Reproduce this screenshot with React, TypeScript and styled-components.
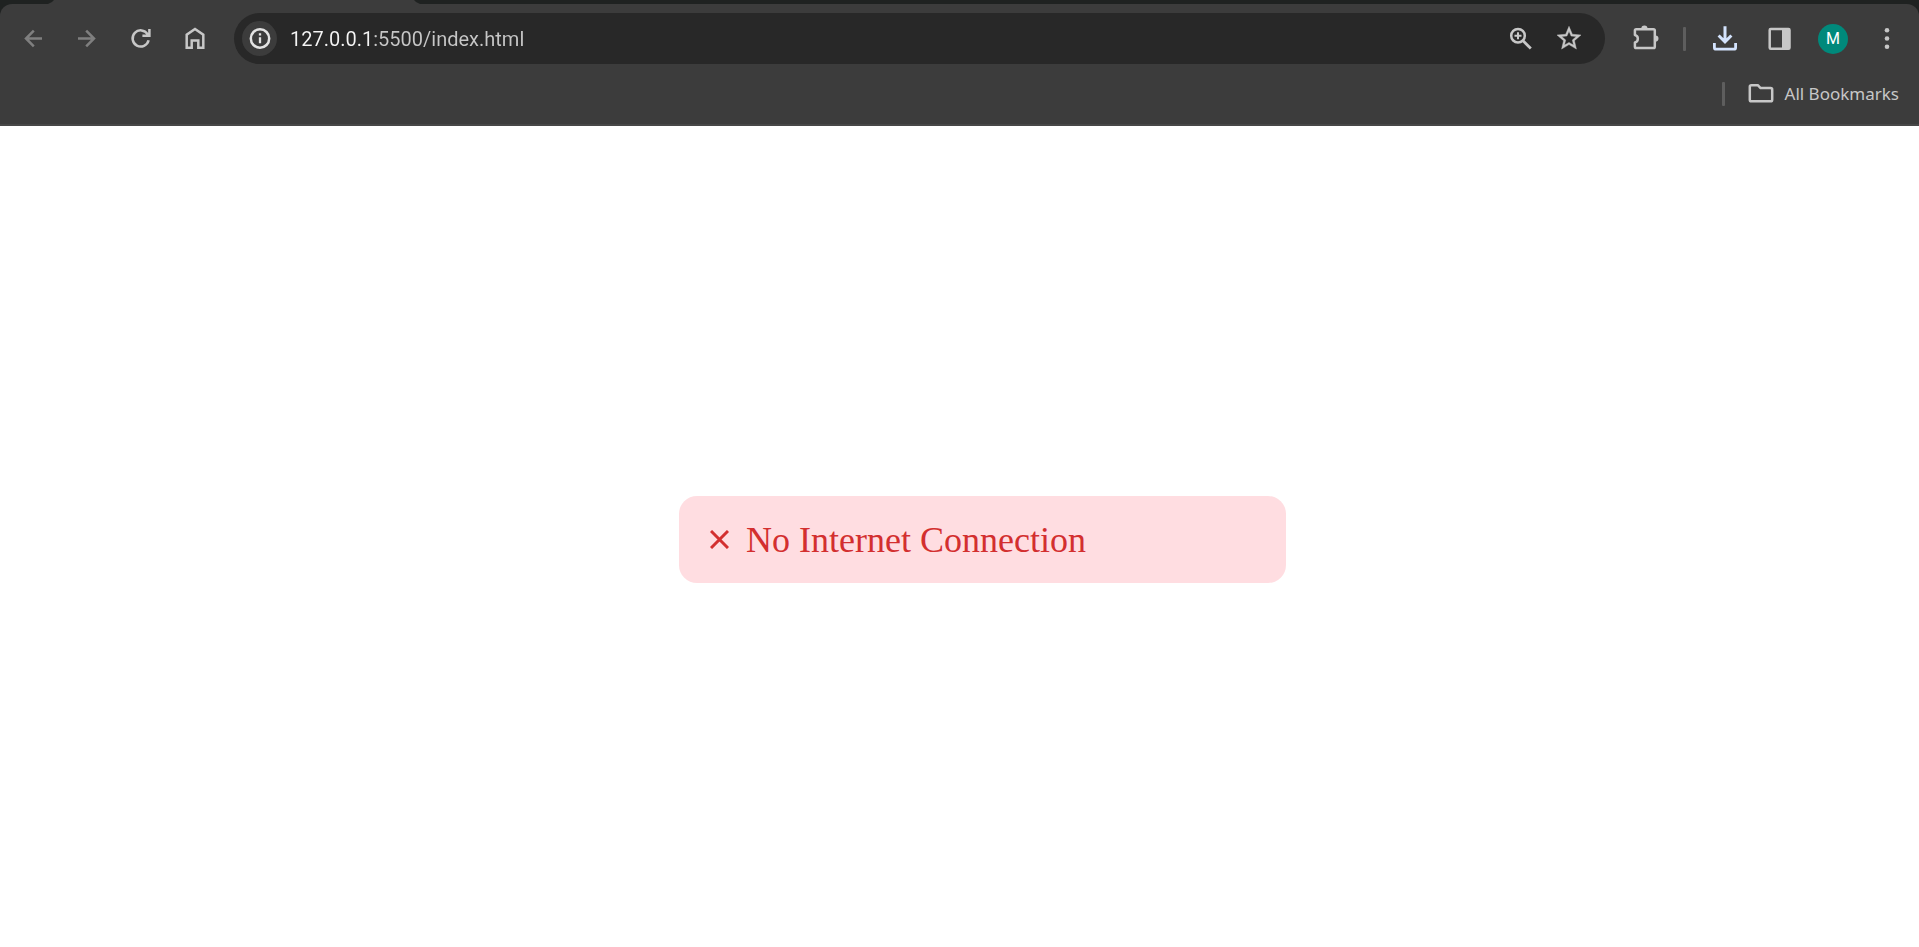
import React, { useState } from "react";
import styled, { createGlobalStyle } from "styled-components";

const GlobalStyle = createGlobalStyle`
  *, *::before, *::after { box-sizing: border-box; }
  html, body, #root { height: 100%; }
  body { margin: 0; background: #fff; }
  button, input { font: inherit; border: 0; padding: 0; background: none; outline: none; }
  button { cursor: pointer; }
`;

const Window = styled.div`
  display: flex;
  flex-direction: column;
  min-height: 100%;
`;

const BrowserChrome = styled.header`
  background: #1f2221;
  font-family: Roboto, "Segoe UI", sans-serif;
`;

const TabStrip = styled.div`
  height: 4px;
  padding-left: 48px;
`;

const ActiveTab = styled.div`
  width: 372px;
  height: 4px;
  background: #3c3c3c;
  clip-path: polygon(6px 0, 366px 0, 368px 2px, 100% 100%, 0 100%, 4px 2px);
`;

const Bars = styled.div`
  background: #3c3c3c;
  border-radius: 12px 12px 0 0;
  border-bottom: 2px solid #474747;
`;

const Toolbar = styled.nav`
  display: flex;
  align-items: center;
  padding: 9px 5px 0 6px;
`;

const IconButton = styled.button<{ $tone?: string; $width?: number }>`
  display: flex;
  flex: none;
  align-items: center;
  justify-content: center;
  width: ${(p) => p.$width ?? 54}px;
  height: 31px;
  color: ${(p) => p.$tone ?? "#c7c7c7"};
`;

const Glyph = styled.svg`
  display: block;
  flex: none;
  width: 30px;
  height: 31px;
  fill: none;
  stroke: currentColor;
  stroke-width: 2.5;
`;

const AddressBar = styled.div`
  display: flex;
  flex: 1;
  align-items: center;
  height: 51px;
  margin: 0 14px 0 12px;
  padding: 0 12px 0 8px;
  border-radius: 26px;
  background: #282828;
`;

const SiteInfo = styled.button`
  display: flex;
  flex: none;
  align-items: center;
  justify-content: center;
  width: 35px;
  height: 35px;
  border-radius: 50%;
  background: #3c3c3c;
  color: #e3e3e3;
`;

const UrlInput = styled.input`
  flex: 1;
  min-width: 0;
  height: 31px;
  margin-left: 13px;
  font-size: 20px;
  line-height: 30px;
  color: #c7c7c7;
  background: linear-gradient(to right, #f5f5f5 79px, #c7c7c7 79px);
  background-clip: text;
  -webkit-text-fill-color: transparent;
`;

const Divider = styled.span`
  flex: none;
  width: 3px;
  height: 24px;
  margin: 0 12px 0 10px;
  border-radius: 1px;
  background: #5e5e5e;
`;

const Avatar = styled.span`
  display: flex;
  align-items: center;
  justify-content: center;
  width: 30px;
  height: 30px;
  border-radius: 50%;
  background: #00897b;
  color: #fff;
  font: 16px/30px Roboto, sans-serif;
`;

const BookmarksBar = styled.div`
  display: flex;
  align-items: center;
  justify-content: flex-end;
  padding: 14px 20px 15px;
`;

const BookmarksButton = styled.button`
  display: flex;
  align-items: center;
  gap: 9px;
  margin-left: 9px;
  height: 31px;
  font-family: "Noto Sans", "Segoe UI", sans-serif;
  font-size: 17px;
  line-height: 31px;
  color: #c7c7c7;
`;

const Page = styled.main`
  display: flex;
  flex: 1;
  align-items: center;
  justify-content: center;
  padding: 6px 0 0 46px;
`;

const Toast = styled.div`
  display: flex;
  align-items: center;
  gap: 17px;
  width: 607px;
  max-width: 100%;
  padding: 24px 31px 22px;
  border-radius: 18px;
  background: #ffdde1;
  color: #d32f2f;
  font: 36px/41px "Liberation Serif", "Times New Roman", serif;
`;

const Cross = styled.svg`
  flex: none;
  width: 19px;
  height: 19px;
  margin-bottom: 2px;
  stroke: currentColor;
  stroke-width: 3;
`;

type IconProps = { children: React.ReactNode };
const Icon = ({ children }: IconProps) => (
  <Glyph viewBox="0 0 30 31" aria-hidden="true">
    {children}
  </Glyph>
);

export default function App() {
  const [url, setUrl] = useState("127.0.0.1:5500/index.html");

  return (
    <>
      <GlobalStyle />
      <Window>
        <BrowserChrome>
          <TabStrip>
            <ActiveTab />
          </TabStrip>
          <Bars>
            <Toolbar aria-label="Browser toolbar">
              <IconButton aria-label="Back" $tone="#7f7f7f">
                <Icon>
                  <path d="M24 15.5H8M15.8 7.7 8 15.5l7.8 7.8" />
                </Icon>
              </IconButton>
              <IconButton aria-label="Forward" $tone="#7f7f7f">
                <Icon>
                  <path d="M6 15.5h16M14.2 7.7l7.8 7.8-7.8 7.8" />
                </Icon>
              </IconButton>
              <IconButton aria-label="Reload">
                <Icon>
                  <path d="M22.6 17.3A8.1 8.1 0 1 1 21.6 11.2L22.4 12.4M23.4 6v6.7h-7" />
                </Icon>
              </IconButton>
              <IconButton aria-label="Home">
                <Icon>
                  <path d="M6.7 24.8V11.7L15 5.9l8.3 5.8v13.1h-5V17.5h-6.6v7.3Z" />
                </Icon>
              </IconButton>

              <AddressBar>
                <SiteInfo aria-label="View site information">
                  <Icon>
                    <circle cx="15" cy="15.5" r="9.2" />
                    <path d="M15 14.3v5.9M15 10.2v2.4" strokeWidth="2.3" />
                  </Icon>
                </SiteInfo>
                <UrlInput
                  aria-label="Address"
                  value={url}
                  spellCheck={false}
                  onChange={(e) => setUrl(e.target.value)}
                />
                <IconButton aria-label="Zoom" $width={48}>
                  <Icon>
                    <circle cx="12" cy="12.7" r="6.8" />
                    <path d="m16.8 17.5 8 8" strokeWidth="2.8" />
                    <path d="M12 9.2v7M8.5 12.7h7" strokeWidth="2" />
                  </Icon>
                </IconButton>
                <IconButton aria-label="Bookmark this tab" $width={48}>
                  <Icon>
                    <path
                      transform="translate(.6 .9) scale(1.2)"
                      fill="currentColor"
                      strokeWidth=".35"
                      d="m22 9.24-7.19-.62L12 2 9.19 8.63 2 9.24l5.46 4.73L5.82 21 12 17.27 18.18 21l-1.63-7.03L22 9.24zM12 15.4l-3.76 2.27 1-4.28-3.32-2.88 4.38-.38L12 6.1l1.71 4.04 4.38.38-3.32 2.88 1 4.28L12 15.4z"
                    />
                  </Icon>
                </IconButton>
              </AddressBar>

              <IconButton aria-label="Extensions">
                <Icon>
                  <path
                    strokeLinejoin="round"
                    d="M5.2 6.2h17.3q1.3 0 1.3 1.3v16.3q0 1.3-1.3 1.3H5.2q-1.3 0-1.3-1.3v-4.4a3.8 3.8 0 0 0 0-7.4V7.5q0-1.3 1.3-1.3Z"
                  />
                  <path
                    fill="currentColor"
                    stroke="none"
                    d="M10.3 5.5a3.1 3.1 0 0 1 6.2 0ZM24.4 12.4a3.1 3.1 0 0 1 0 6.2Z"
                  />
                </Icon>
              </IconButton>
              <Divider />
              <IconButton aria-label="Downloads" $tone="#d3e3fd">
                <Icon>
                  <path d="M15 3.3v16M8.6 12.5l6.4 6.4 6.4-6.4" strokeWidth="3" />
                  <path d="M4.4 20v4.4q0 1.8 1.8 1.8h17.6q1.8 0 1.8-1.8V20" strokeWidth="2.8" />
                </Icon>
              </IconButton>
              <IconButton aria-label="Side panel">
                <Icon>
                  <rect x="5.7" y="5.9" width="19.8" height="19.8" rx="1" />
                  <path d="M18 5.5h7.5v20H18Z" fill="currentColor" stroke="none" />
                </Icon>
              </IconButton>
              <IconButton aria-label="Profile">
                <Avatar>M</Avatar>
              </IconButton>
              <IconButton aria-label="Menu">
                <Icon>
                  <g fill="currentColor" stroke="none">
                    <circle cx="15" cy="7.3" r="2.3" />
                    <circle cx="15" cy="15.5" r="2.3" />
                    <circle cx="15" cy="23.8" r="2.3" />
                  </g>
                </Icon>
              </IconButton>
            </Toolbar>

            <BookmarksBar>
              <Divider />
              <BookmarksButton>
                <Icon>
                  <path
                    strokeLinejoin="round"
                    d="M5.4 7.2h6.4l2.8 2.9h10q1.6 0 1.6 1.6v10q0 1.6-1.6 1.6H5.4q-1.6 0-1.6-1.6V8.8q0-1.6 1.6-1.6Z"
                  />
                </Icon>
                All Bookmarks
              </BookmarksButton>
            </BookmarksBar>
          </Bars>
        </BrowserChrome>

        <Page>
          <Toast role="alert">
            <Cross viewBox="0 0 19 19" aria-hidden="true">
              <path d="m1 1 17 17M18 1 1 18" />
            </Cross>
            No Internet Connection
          </Toast>
        </Page>
      </Window>
    </>
  );
}
